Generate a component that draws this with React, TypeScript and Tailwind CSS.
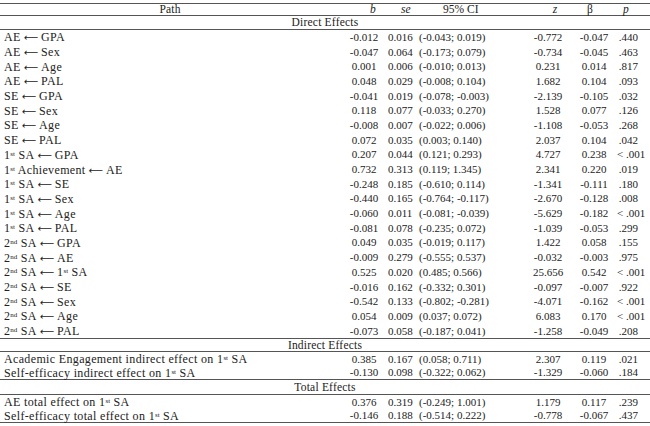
import React from "react";

type Row = [React.ReactNode, string, string, string, string, string, string];

const Sup = ({ children }: { children: React.ReactNode }) => (
  <sup className="text-[7px] relative -top-[3px] align-baseline tracking-normal">{children}</sup>
);
const First = () => (
  <>
    1<Sup>st</Sup>
  </>
);
const Second = () => (
  <>
    2<Sup>nd</Sup>
  </>
);
const Arr = () => (
  <span
    className="mx-[3px] text-[10px] tracking-normal"
    style={{ fontFamily: '"DejaVu Sans", sans-serif' }}
  >
    ⟵
  </span>
);

const direct: Row[] = [
  [<>AE<Arr />GPA</>, "-0.012", "0.016", "(-0.043; 0.019)", "-0.772", "-0.047", ".440"],
  [<>AE<Arr />Sex</>, "-0.047", "0.064", "(-0.173; 0.079)", "-0.734", "-0.045", ".463"],
  [<>AE<Arr />Age</>, "0.001", "0.006", "(-0.010; 0.013)", "0.231", "0.014", ".817"],
  [<>AE<Arr />PAL</>, "0.048", "0.029", "(-0.008; 0.104)", "1.682", "0.104", ".093"],
  [<>SE<Arr />GPA</>, "-0.041", "0.019", "(-0.078; -0.003)", "-2.139", "-0.105", ".032"],
  [<>SE<Arr />Sex</>, "0.118", "0.077", "(-0.033; 0.270)", "1.528", "0.077", ".126"],
  [<>SE<Arr />Age</>, "-0.008", "0.007", "(-0.022; 0.006)", "-1.108", "-0.053", ".268"],
  [<>SE<Arr />PAL</>, "0.072", "0.035", "(0.003; 0.140)", "2.037", "0.104", ".042"],
  [<><First /> SA<Arr />GPA</>, "0.207", "0.044", "(0.121; 0.293)", "4.727", "0.238", "< .001"],
  [<><First /> Achievement<Arr />AE</>, "0.732", "0.313", "(0.119; 1.345)", "2.341", "0.220", ".019"],
  [<><First /> SA<Arr />SE</>, "-0.248", "0.185", "(-0.610; 0.114)", "-1.341", "-0.111", ".180"],
  [<><First /> SA<Arr />Sex</>, "-0.440", "0.165", "(-0.764; -0.117)", "-2.670", "-0.128", ".008"],
  [<><First /> SA<Arr />Age</>, "-0.060", "0.011", "(-0.081; -0.039)", "-5.629", "-0.182", "< .001"],
  [<><First /> SA<Arr />PAL</>, "-0.081", "0.078", "(-0.235; 0.072)", "-1.039", "-0.053", ".299"],
  [<><Second /> SA<Arr />GPA</>, "0.049", "0.035", "(-0.019; 0.117)", "1.422", "0.058", ".155"],
  [<><Second /> SA<Arr />AE</>, "-0.009", "0.279", "(-0.555; 0.537)", "-0.032", "-0.003", ".975"],
  [<><Second /> SA<Arr /><First /> SA</>, "0.525", "0.020", "(0.485; 0.566)", "25.656", "0.542", "< .001"],
  [<><Second /> SA<Arr />SE</>, "-0.016", "0.162", "(-0.332; 0.301)", "-0.097", "-0.007", ".922"],
  [<><Second /> SA<Arr />Sex</>, "-0.542", "0.133", "(-0.802; -0.281)", "-4.071", "-0.162", "< .001"],
  [<><Second /> SA<Arr />Age</>, "0.054", "0.009", "(0.037; 0.072)", "6.083", "0.170", "< .001"],
  [<><Second /> SA<Arr />PAL</>, "-0.073", "0.058", "(-0.187; 0.041)", "-1.258", "-0.049", ".208"],
];

const indirect: Row[] = [
  [<>Academic Engagement indirect effect on <First /> SA</>, "0.385", "0.167", "(0.058; 0.711)", "2.307", "0.119", ".021"],
  [<>Self-efficacy indirect effect on <First /> SA</>, "-0.130", "0.098", "(-0.322; 0.062)", "-1.329", "-0.060", ".184"],
];

const total: Row[] = [
  [<>AE total effect on <First /> SA</>, "0.376", "0.319", "(-0.249; 1.001)", "1.179", "0.117", ".239"],
  [<>Self-efficacy total effect on <First /> SA</>, "-0.146", "0.188", "(-0.514; 0.222)", "-0.778", "-0.067", ".437"],
];

const grid = "grid grid-cols-[340px_48px_24px_113px_46px_46px_33px] items-center";

function DataRow({ r, h }: { r: Row; h: string }) {
  return (
    <div className={`${grid} ${h} whitespace-nowrap text-[11px]`}>
      <div className="pl-[4px] text-[12px] tracking-[0.35px]">{r[0]}</div>
      <div className="text-center">{r[1]}</div>
      <div className="text-center">{r[2]}</div>
      <div className="pl-[7px]">{r[3]}</div>
      <div className="text-center">{r[4]}</div>
      <div className="text-center">{r[5]}</div>
      <div className="text-right pr-[12px]">{r[6]}</div>
    </div>
  );
}

function Section({ title, h }: { title: string; h: string }) {
  return (
    <div className={`${h} flex items-center justify-center border-b border-[#555] tracking-[0.2px]`}>
      {title}
    </div>
  );
}

export default function App() {
  return (
    <div
      className="w-[650px] h-[426px] bg-white pt-[3px] text-[11.5px] leading-none text-[#222]"
      style={{ fontFamily: '"Liberation Serif", "DejaVu Serif", serif' }}
    >
      <div className="border-t border-[#555]">
        <div className={`${grid} h-[12px] border-b border-[#555] whitespace-nowrap`}>
          <div className="text-center tracking-[0.2px]">Path</div>
          <div className="pl-[30px] italic">b</div>
          <div className="pl-[13px] italic">se</div>
          <div className="pl-[31px]">95% CI</div>
          <div className="text-center pl-[14px] italic">z</div>
          <div className="text-center pr-[8px]">β</div>
          <div className="pl-[6px] italic">p</div>
        </div>
        <Section title="Direct Effects" h="h-[14px]" />
        <div className="border-b border-[#555]">
          {direct.map((r, i) => (
            <DataRow key={i} r={r} h="h-[14.7px]" />
          ))}
        </div>
        <Section title="Indirect Effects" h="h-[13px]" />
        <div className="border-b border-[#555]">
          {indirect.map((r, i) => (
            <DataRow key={i} r={r} h="h-[13.5px]" />
          ))}
        </div>
        <Section title="Total Effects" h="h-[15px]" />
        <div className="border-b border-[#555]">
          {total.map((r, i) => (
            <DataRow key={i} r={r} h="h-[13.5px]" />
          ))}
        </div>
      </div>
    </div>
  );
}
